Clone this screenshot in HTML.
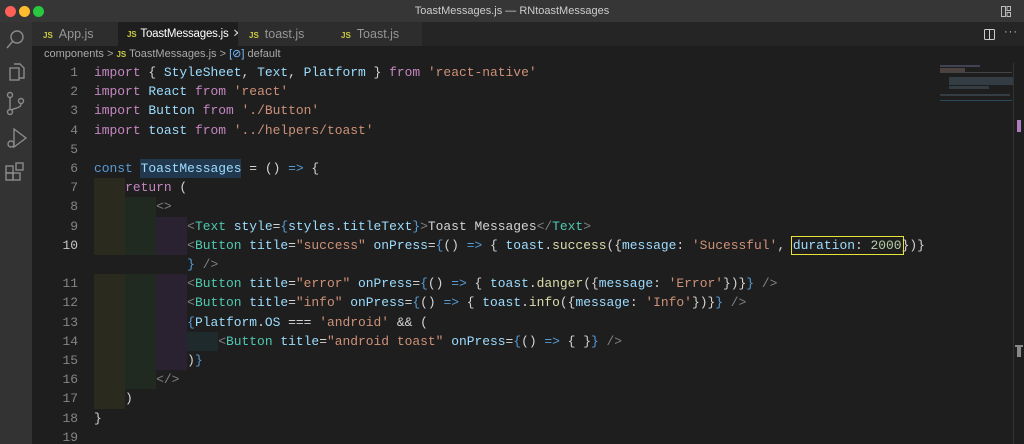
<!DOCTYPE html>
<html><head><meta charset="utf-8"><style>
*{margin:0;padding:0;box-sizing:border-box}
html,body{width:1024px;height:444px;overflow:hidden}
body{background:#1e1e1e;position:relative;font-family:"Liberation Sans",sans-serif}
.title{position:absolute;left:0;top:0;width:1024px;height:22px;background:#363636;color:#ccc;font-size:11px;text-align:center;line-height:22px}
.dot{position:absolute;top:6px;width:11px;height:11px;border-radius:50%}
.act{position:absolute;left:0;top:22px;width:32px;height:422px;background:#333}
.tabs{position:absolute;left:32px;top:22px;width:992px;height:24px;background:#252526}
.tab{position:absolute;top:0;height:24px;background:#2d2d2d;color:#969696;font-size:12.5px;line-height:24px;padding-left:11px;white-space:nowrap;overflow:hidden}
.tab b{color:#cbcb41;font-size:8px;font-weight:bold;margin-right:6px}
.crumb{position:absolute;left:32px;top:46px;height:17px;color:#a9a9a9;font-size:11px;line-height:17px;padding-left:12px;white-space:nowrap}
.code{position:absolute;left:0;top:63px;font-family:"Liberation Mono",monospace;font-size:12.95px;color:#d4d4d4;white-space:pre}
.row{position:absolute;left:94px;height:19.2px;line-height:19.2px}
.ln{position:absolute;left:40px;width:38px;text-align:right;color:#858585;font-family:"Liberation Mono",monospace;font-size:12.95px;line-height:19.2px;height:19.2px}
.sh{position:absolute;height:19.2px}
.k{color:#c586c0}.i{color:#9cdcfe}.s{color:#ce9178}.c{color:#569cd6}.t{color:#4ec9b0}.g{color:#808080}.f{color:#dcdcaa}.n{color:#b5cea8}.b{color:#569cd6}
</style></head><body>
<div class="title">ToastMessages.js — RNtoastMessages</div>
<div class="dot" style="left:5px;background:#fe5f57"></div>
<div class="dot" style="left:19px;background:#febc2e"></div>
<div class="dot" style="left:33px;background:#28c840"></div>
<svg style="position:absolute;left:1001px;top:6px" width="10" height="11" viewBox="0 0 10 11" fill="none" stroke="#bbb"><rect x="0.5" y="0.5" width="4" height="10"/><rect x="6" y="0.5" width="3.5" height="4"/><rect x="6" y="6.5" width="3.5" height="4"/></svg>
<div class="act"></div>
<svg style="position:absolute;left:0;top:22px" width="32" height="180" fill="none" stroke="#8a8a8a" stroke-width="1.4">
<circle cx="17" cy="15" r="6"/><path d="M13 19l-6 7"/>
<rect x="10" y="46" width="9" height="12"/><path d="M14 42h6l4 4v10h-5"/>
<circle cx="10" cy="73" r="2.5"/><circle cx="10" cy="90" r="2.5"/><circle cx="21" cy="79" r="2.5"/><path d="M10 76v11M21 82c0 4-6 4-10 6"/>
<path d="M14 107v18l12-9z"/><circle cx="11" cy="122" r="3"/>
<rect x="6" y="151" width="7" height="7"/><rect x="13" y="151" width="7" height="7"/><rect x="6" y="144" width="7" height="7"/><rect x="16" y="141" width="7" height="7"/>
</svg>
<div class="tabs">
<div class="tab" style="left:0;width:86px"><b>JS</b>App.js</div>
<div class="tab" style="left:86px;width:120px;background:#1e1e1e;color:#fff;padding-left:9px;font-size:11.5px;letter-spacing:-0.2px"><b style="margin-right:4px">JS</b>ToastMessages.js <span style="color:#ccc;margin-left:1px">✕</span></div>
<div class="tab" style="left:206px;width:92px"><b>JS</b>toast.js</div>
<div class="tab" style="left:298px;width:92px"><b>JS</b>Toast.js</div>
</div>
<svg style="position:absolute;left:984px;top:29px" width="11" height="11" fill="none" stroke="#ccc"><rect x="0.5" y="0.5" width="10" height="10" rx="1"/><path d="M5.5 0.5v10"/></svg>
<div style="position:absolute;left:1004px;top:26px;color:#ccc;font-size:11px;letter-spacing:1px">···</div>
<div class="crumb">components &gt; <b style="color:#cbcb41;font-size:8px">JS</b> ToastMessages.js &gt; <span style="color:#75beff">[⊘]</span> default</div>

<div class="code">
<div class="sh" style="top:115.2px;left:94px;width:31px;background:#2a2a1f"></div>
<div class="sh" style="top:134.4px;left:94px;width:31px;height:57.6px;background:#2a2a1f"></div>
<div class="sh" style="top:134.4px;left:125px;width:31px;height:57.6px;background:#212a21"></div>
<div class="sh" style="top:153.6px;left:156px;width:31px;height:38.4px;background:#2a2230"></div>
<div class="sh" style="top:211.2px;left:94px;width:31px;height:134.4px;background:#2a2a1f"></div>
<div class="sh" style="top:211.2px;left:125px;width:31px;height:115.2px;background:#212a21"></div>
<div class="sh" style="top:211.2px;left:156px;width:31px;height:96px;background:#2a2230"></div>
<div class="sh" style="top:268.8px;left:187px;width:31px;background:#1f2a2c"></div>
<div class="sh" style="top:96px;left:140px;width:101px;background:#264f78;opacity:.55"></div>

<div class="ln" style="top:0">1</div><div class="ln" style="top:19.2px">2</div><div class="ln" style="top:38.4px">3</div><div class="ln" style="top:57.6px">4</div><div class="ln" style="top:76.8px">5</div><div class="ln" style="top:96px">6</div><div class="ln" style="top:115.2px">7</div><div class="ln" style="top:134.4px">8</div><div class="ln" style="top:153.6px">9</div><div class="ln" style="top:172.8px;color:#c6c6c6">10</div><div class="ln" style="top:211.2px">11</div><div class="ln" style="top:230.4px">12</div><div class="ln" style="top:249.6px">13</div><div class="ln" style="top:268.8px">14</div><div class="ln" style="top:288px">15</div><div class="ln" style="top:307.2px">16</div><div class="ln" style="top:326.4px">17</div><div class="ln" style="top:345.6px">18</div><div class="ln" style="top:364.8px">19</div>

<div class="row" style="top:0"><span class="k">import</span> { <span class="i">StyleSheet</span>, <span class="i">Text</span>, <span class="i">Platform</span> } <span class="k">from</span> <span class="s">'react-native'</span></div>
<div class="row" style="top:19.2px"><span class="k">import</span> <span class="i">React</span> <span class="k">from</span> <span class="s">'react'</span></div>
<div class="row" style="top:38.4px"><span class="k">import</span> <span class="i">Button</span> <span class="k">from</span> <span class="s">'./Button'</span></div>
<div class="row" style="top:57.6px"><span class="k">import</span> <span class="i">toast</span> <span class="k">from</span> <span class="s">'../helpers/toast'</span></div>
<div class="row" style="top:96px"><span class="c">const</span> <span class="i">ToastMessages</span> = () <span class="c">=&gt;</span> {</div>
<div class="row" style="top:115.2px">    <span class="k">return</span> (</div>
<div class="row" style="top:134.4px">        <span class="g">&lt;&gt;</span></div>
<div class="row" style="top:153.6px">            <span class="g">&lt;</span><span class="t">Text</span> <span class="i">style</span>=<span class="b">{</span><span class="i">styles</span>.<span class="i">titleText</span><span class="b">}</span><span class="g">&gt;</span>Toast Messages<span class="g">&lt;/</span><span class="t">Text</span><span class="g">&gt;</span></div>
<div class="row" style="top:172.8px">            <span class="g">&lt;</span><span class="t">Button</span> <span class="i">title</span>=<span class="s">"success"</span> <span class="i">onPress</span>=<span class="b">{</span>() <span class="c">=&gt;</span> { <span class="i">toast</span>.<span class="f">success</span>({<span class="i">message</span>: <span class="s">'Sucessful'</span>, <span style="outline:1.5px solid #e8e337;outline-offset:1px"><span class="i">duration</span>: <span class="n">2000</span></span>})}</div>
<div class="row" style="top:192px">            <span class="b">}</span> <span class="g">/&gt;</span></div>
<div class="row" style="top:211.2px">            <span class="g">&lt;</span><span class="t">Button</span> <span class="i">title</span>=<span class="s">"error"</span> <span class="i">onPress</span>=<span class="b">{</span>() <span class="c">=&gt;</span> { <span class="i">toast</span>.<span class="f">danger</span>({<span class="i">message</span>: <span class="s">'Error'</span>})}<span class="b">}</span> <span class="g">/&gt;</span></div>
<div class="row" style="top:230.4px">            <span class="g">&lt;</span><span class="t">Button</span> <span class="i">title</span>=<span class="s">"info"</span> <span class="i">onPress</span>=<span class="b">{</span>() <span class="c">=&gt;</span> { <span class="i">toast</span>.<span class="f">info</span>({<span class="i">message</span>: <span class="s">'Info'</span>})}<span class="b">}</span> <span class="g">/&gt;</span></div>
<div class="row" style="top:249.6px">            <span class="b">{</span><span class="i">Platform</span>.<span class="i">OS</span> === <span class="s">'android'</span> &amp;&amp; (</div>
<div class="row" style="top:268.8px">                <span class="g">&lt;</span><span class="t">Button</span> <span class="i">title</span>=<span class="s">"android toast"</span> <span class="i">onPress</span>=<span class="b">{</span>() <span class="c">=&gt;</span> { }<span class="b">}</span> <span class="g">/&gt;</span></div>
<div class="row" style="top:288px">            )<span class="b">}</span></div>
<div class="row" style="top:307.2px">        <span class="g">&lt;/&gt;</span></div>
<div class="row" style="top:326.4px">    )</div>
<div class="row" style="top:345.6px">}</div>
</div>

<div style="position:absolute;left:934px;top:63px;width:80px;height:381px;border-right:1px solid #333">
<div style="position:absolute;left:6px;top:2px;width:40px;height:2px;background:#5a5a7a;opacity:.6"></div>
<div style="position:absolute;left:6px;top:5px;width:25px;height:4px;background:#6a5a5a;opacity:.6"></div>
<div style="position:absolute;left:6px;top:9px;width:72px;height:1px;background:#444"></div>
<div style="position:absolute;left:15px;top:14px;width:64px;height:8px;background:#4a5a6a;opacity:.5"></div>
<div style="position:absolute;left:15px;top:23px;width:40px;height:3px;background:#4a5a6a;opacity:.5"></div>
<div style="position:absolute;left:6px;top:31px;width:70px;height:2px;background:#4a5a6a;opacity:.5"></div>
<div style="position:absolute;left:6px;top:37px;width:72px;height:1px;background:#2c4a5a"></div>
</div>
<div style="position:absolute;left:1017px;top:120px;width:4px;height:12px;background:#b07cc0"></div>
<div style="position:absolute;left:1015px;top:345px;width:8px;height:2px;background:#888"></div>
<div style="position:absolute;left:1017px;top:347px;width:4px;height:10px;background:#888"></div>
</body></html>
